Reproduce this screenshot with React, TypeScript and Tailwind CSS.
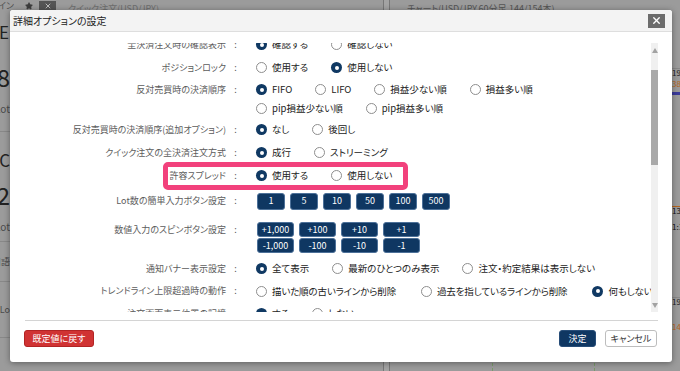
import { X, Star } from 'lucide-react';

type Opt = { t: string; on?: boolean };

const LOT = ['1', '5', '10', '50', '100', '500'];
const SPIN = ['+1,000', '+100', '+10', '+1', '-1,000', '-100', '-10', '-1'];

function Radio({ on }: { on?: boolean }) {
  if (on) {
    return (
      <span className="w-[11px] h-[11px] rounded-full bg-[#103963] flex items-center justify-center shrink-0">
        <span className="w-[4px] h-[4px] rounded-full bg-white" />
      </span>
    );
  }
  return <span className="w-[11px] h-[11px] rounded-full border border-[#8e8e8e] bg-white shrink-0" />;
}

function Options({ items, wide }: { items: Opt[]; wide?: boolean }) {
  return (
    <div className={wide ? 'flex items-center gap-x-[25px]' : 'flex items-center gap-x-[23px]'}>
      {items.map(o => (
        <div key={o.t} className="flex items-center gap-[5px] text-[9.5px] text-[#222] whitespace-nowrap">
          <Radio on={o.on} />
          <span>{o.t}</span>
        </div>
      ))}
    </div>
  );
}

function Label({ text, className }: { text: string; className: string }) {
  return (
    <div className={'w-[215px] shrink-0 flex justify-end items-center text-[9px] text-[#5c5c5c] whitespace-nowrap ' + className}>
      <span>{text}</span>
      <span className="w-[9px] ml-[5px] text-center">:</span>
    </div>
  );
}

function Background() {
  return (
    <div className="absolute inset-0 flex bg-[#9b9b9b] text-[#4b4b4b]">
      {/* 左パネル */}
      <div className="w-[383px] flex flex-col">
        <div className="h-[11px] flex items-center text-[9px] text-[#505050]">
          <div className="w-[14px] flex justify-end overflow-hidden whitespace-nowrap">ライン</div>
          <Star size={8} className="ml-[11px] fill-[#3c3c3c] text-[#3c3c3c]" />
          <div className="ml-[6px] w-[17px] h-[10px] bg-[#555] flex items-center justify-center">
            <X size={8} strokeWidth={3} className="text-[#bdbdbd]" />
          </div>
          <span className="ml-[12px] text-[#6e6e6e] pt-[6px]">クイック注文(USD/JPY)</span>
        </div>
        <div className="w-[10px] flex flex-col overflow-hidden whitespace-nowrap">
          <div className="h-[42px] flex justify-end items-center text-[17px] text-[#222] pr-[1px]">E</div>
          <div className="h-[48px] flex justify-end items-center text-[24px] text-[#222]">1.8</div>
          <div className="h-[30px] flex justify-end items-start text-[10px]">Lot</div>
          <div className="h-[18px] border-t border-[#888]" />
          <div className="h-[22px] flex justify-end items-center text-[17px] text-[#222]">C</div>
          <div className="h-[48px] flex justify-end items-center text-[24px] text-[#222]">1.2</div>
          <div className="h-[22px] flex justify-end items-start text-[10px]">Lot</div>
          <div className="h-[40px] border-t border-[#888] flex justify-end items-center text-[9px]">口語</div>
          <div className="h-[56px] border-t border-[#888] flex justify-end items-center text-[9px]">建Lo</div>
          <div className="flex-1 border-t border-[#888]" />
        </div>
      </div>
      {/* 区切り */}
      <div className="w-[7px] border-x border-[#777] bg-[#a3a3a3]" />
      {/* チャート */}
      <div className="flex-1 flex flex-col">
        <div className="h-[11px] pl-[17px] pt-[2px] text-[9px] text-[#555] whitespace-nowrap overflow-hidden">
          チャート(USD/JPY,60分足,144/154本)
        </div>
        <div className="flex-1 flex">
          <div className="flex-1 flex justify-end">
            <div className="w-[50px] flex justify-around">
              <div className="border-l border-dashed border-[#7a9a6a]" />
            </div>
            <div className="w-[155px] flex justify-around">
              <div className="border-l border-dashed border-[#7a9a6a]" />
            </div>
          </div>
          <div className="w-[8px] flex flex-col text-[8px] leading-none whitespace-nowrap overflow-hidden">
            <div className="h-[57px]" />
            <div className="h-[12px] border-t border-[#888] text-[#222]">19</div>
            <div className="h-[12px] text-[#b5651d]">38</div>
            <div className="h-[3px] bg-[#3b3b9b]" />
            <div className="h-[112px] border-b border-[#b5651d]" />
            <div className="h-[16px] text-[#111]">13</div>
            <div className="h-[74px] text-[#111]">1:1</div>
            <div className="h-[26px] border-t border-[#888] text-[#222]">19</div>
            <div className="text-[#b5651d]">14</div>
          </div>
        </div>
      </div>
    </div>
  );
}

export default function App() {
  return (
    <div className="relative w-[680px] h-[371px] overflow-hidden font-['Noto_Sans_CJK_JP',sans-serif] [font-feature-settings:'palt']">
      <Background />

      {/* 詳細オプションダイアログ */}
      <div className="absolute left-[10px] top-[10px] w-[662px] h-[352px] bg-white rounded-[3px] shadow-[0_1px_6px_rgba(0,0,0,0.4)] flex flex-col overflow-hidden">
        <div className="h-[22px] shrink-0 bg-[#f3f3f3] border-b border-[#dedede] flex items-center justify-between pl-[3px] pr-[7px]">
          <span className="text-[10px] text-[#222]">詳細オプションの設定</span>
          <button className="w-[17px] h-[14px] bg-[#6c6c6c] flex items-center justify-center">
            <X size={11} strokeWidth={3} className="text-white" />
          </button>
        </div>

        <div className="flex-1 flex flex-col pt-[11px] pl-[15px] pr-[14px] pb-[15px]">
          {/* スクロール領域 */}
          <div className="h-[269px] flex">
            <div className="flex-1 overflow-hidden">
              <div className="flex flex-col -mt-[12px]">
                <div className="h-[25px] flex items-center pt-[2px]">
                  <Label text="全決済注文時の確認表示" className="h-[23px]" />
                  <div className="ml-[16px]"><Options items={[{ t: '確認する', on: true }, { t: '確認しない' }]} /></div>
                </div>

                <div className="h-[23px] flex items-center">
                  <Label text="ポジションロック" className="h-[23px]" />
                  <div className="ml-[16px]"><Options items={[{ t: '使用する' }, { t: '使用しない', on: true }]} /></div>
                </div>

                <div className="flex items-start pb-[1px]">
                  <Label text="反対売買時の決済順序" className="h-[21px]" />
                  <div className="ml-[16px] flex flex-col">
                    <div className="h-[21px] flex items-center">
                      <Options items={[{ t: 'FIFO', on: true }, { t: 'LIFO' }, { t: '損益少ない順' }, { t: '損益多い順' }]} />
                    </div>
                    <div className="h-[17px] flex items-center">
                      <Options items={[{ t: 'pip損益少ない順' }, { t: 'pip損益多い順' }]} />
                    </div>
                  </div>
                </div>

                <div className="h-[23px] flex items-center">
                  <Label text="反対売買時の決済順序(追加オプション)" className="h-[23px]" />
                  <div className="ml-[16px]"><Options items={[{ t: 'なし', on: true }, { t: '後回し' }]} /></div>
                </div>

                <div className="h-[23px] flex items-center">
                  <Label text="クイック注文の全決済注文方式" className="h-[23px]" />
                  <div className="ml-[16px]"><Options items={[{ t: '成行', on: true }, { t: 'ストリーミング' }]} /></div>
                </div>

                <div className="relative h-[23px] flex items-center">
                  <Label text="許容スプレッド" className="h-[23px]" />
                  <div className="ml-[16px]"><Options items={[{ t: '使用する', on: true }, { t: '使用しない' }]} /></div>
                  <div className="absolute left-[138px] top-[-2px] w-[245px] h-[28px] border-[5px] border-[#f2417c] rounded-[5px]" />
                </div>

                <div className="h-[28px] flex items-center">
                  <Label text="Lot数の簡単入力ボタン設定" className="h-[28px]" />
                  <div className="ml-[17px] flex gap-[5px]">
                    {LOT.map(v => (
                      <div key={v} className="w-[28px] h-[17px] rounded-[3px] bg-[#0f3762] border border-[#4d7199] text-white text-[9px] flex items-center justify-center">
                        {v}
                      </div>
                    ))}
                  </div>
                </div>

                <div className="flex items-start pt-[7px] pb-[4px]">
                  <Label text="数値入力のスピンボタン設定" className="h-[15px]" />
                  <div className="ml-[17px] grid grid-cols-4 gap-x-[5px] gap-y-[1px]">
                    {SPIN.map(v => (
                      <div key={v} className="w-[37px] h-[15px] rounded-[3px] bg-[#0f3762] border border-[#4d7199] text-white text-[9px] flex items-center justify-center">
                        {v}
                      </div>
                    ))}
                  </div>
                </div>

                <div className="h-[23px] flex items-center">
                  <Label text="通知バナー表示設定" className="h-[23px]" />
                  <div className="ml-[16px]"><Options items={[{ t: '全て表示', on: true }, { t: '最新のひとつのみ表示' }, { t: '注文・約定結果は表示しない' }]} /></div>
                </div>

                <div className="h-[22px] flex items-center">
                  <Label text="トレンドライン上限超過時の動作" className="h-[22px]" />
                  <div className="ml-[16px] tracking-[-0.15px]"><Options wide items={[{ t: '描いた順の古いラインから削除' }, { t: '過去を指しているラインから削除' }, { t: '何もしない', on: true }]} /></div>
                </div>

                <div className="h-[23px] flex items-center">
                  <Label text="注文画面表示位置の記憶" className="h-[23px]" />
                  <div className="ml-[16px]"><Options items={[{ t: 'する', on: true }, { t: 'しない' }]} /></div>
                </div>
              </div>
            </div>

            {/* スクロールバー */}
            <div className="w-[7px] bg-[#f0f0f0] flex flex-col items-center">
              <div className="h-[14px] flex items-center justify-center">
                <div className="w-0 h-0 border-x-[3px] border-x-transparent border-b-[5px] border-b-[#a2a2a2]" />
              </div>
              <div className="h-[13px]" />
              <div className="w-full h-[95px] bg-[#a9a9a9]" />
              <div className="flex-1" />
              <div className="h-[14px] flex items-center justify-center">
                <div className="w-0 h-0 border-x-[3px] border-x-transparent border-t-[5px] border-t-[#a2a2a2]" />
              </div>
            </div>
          </div>

          <div className="mt-[8px] border-t border-[#d4d4d4]" />

          <div className="pt-[9px] flex items-center">
            <button className="-ml-[1px] w-[70px] h-[17px] rounded-[3px] bg-[#d03333] border border-[#b22424] text-white text-[9px] flex items-center justify-center">
              既定値に戻す
            </button>
            <div className="flex-1" />
            <button className="w-[37px] h-[17px] rounded-[3px] bg-[#0f3762] border border-[#274d78] text-white text-[9px] flex items-center justify-center">
              決定
            </button>
            <button className="ml-[9px] mr-[1px] w-[52px] h-[17px] rounded-[3px] bg-white border border-[#bdbdbd] text-[#333] text-[9px] flex items-center justify-center">
              キャンセル
            </button>
          </div>
        </div>
      </div>
    </div>
  );
}
